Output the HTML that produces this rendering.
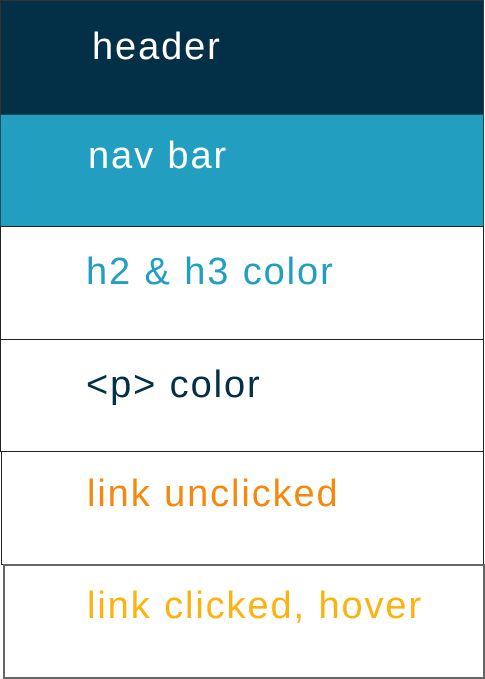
<!DOCTYPE html>
<html><head><style>
body{margin:0;width:485px;height:679px;background:#fff;position:relative;overflow:hidden;font-family:"Liberation Sans",sans-serif;}
.b{position:absolute;box-sizing:border-box;}
.t{position:absolute;font-size:38px;letter-spacing:1.9px;line-height:1;white-space:nowrap;}
</style></head><body>
<div class="b" style="left:0;top:0;width:484px;height:115px;background:#032f47;border:1px solid #333;"></div>
<div class="b" style="left:0;top:114px;width:484px;height:113px;background:#229fc0;border:1px solid #1c4a5a;"></div>
<div class="b" style="left:0;top:226px;width:484px;height:114px;border:1px solid #222;"></div>
<div class="b" style="left:0;top:339px;width:484px;height:113px;border:1px solid #222;"></div>
<div class="b" style="left:1px;top:451px;width:483px;height:114px;border:1px solid #222;"></div>
<div class="b" style="left:3px;top:564px;width:482px;height:115px;border:2px solid #666;"></div>
<div class="t" style="left:92px;top:28px;color:#fff;">header</div>
<div class="t" style="left:88px;top:137px;color:#fff;">nav bar</div>
<div class="t" style="left:86px;top:253px;color:#229fc0;">h2 &amp; h3 color</div>
<div class="t" style="left:86px;top:366px;color:#032f47;">&lt;p&gt; color</div>
<div class="t" style="left:87px;top:475px;color:#f5890f;">link unclicked</div>
<div class="t" style="left:87px;top:587px;color:#fbb40f;">link clicked, hover</div>
</body></html>
